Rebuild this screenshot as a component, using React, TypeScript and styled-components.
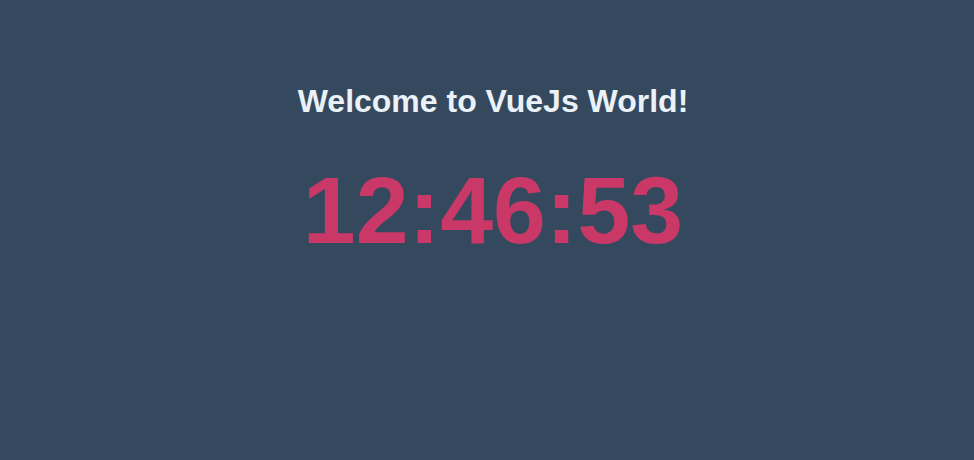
import React from "react";
import styled, { createGlobalStyle } from "styled-components";

const Global = createGlobalStyle`
  html, body { margin: 0; padding: 0; background: #35495e; }
  body { font-family: "Liberation Sans", Arial, sans-serif; }
`;

const Page = styled.div`
  min-height: 460px;
  background: #35495e;
  display: flex;
  flex-direction: column;
  align-items: center;
  padding: 81px 0 0 12px;
  box-sizing: border-box;
`;

const Title = styled.h1`
  margin: 0;
  font-size: 32px;
  font-weight: 700;
  color: #eaf2f8;
  line-height: 40px;
`;

const Clock = styled.div`
  margin-top: 34px;
  font-size: 95px;
  font-weight: 700;
  color: #c93867;
  line-height: 110px;
`;

export default function App() {
  return (
    <>
      <Global />
      <Page>
        <Title>Welcome to VueJs World!</Title>
        <Clock>12:46:53</Clock>
      </Page>
    </>
  );
}
